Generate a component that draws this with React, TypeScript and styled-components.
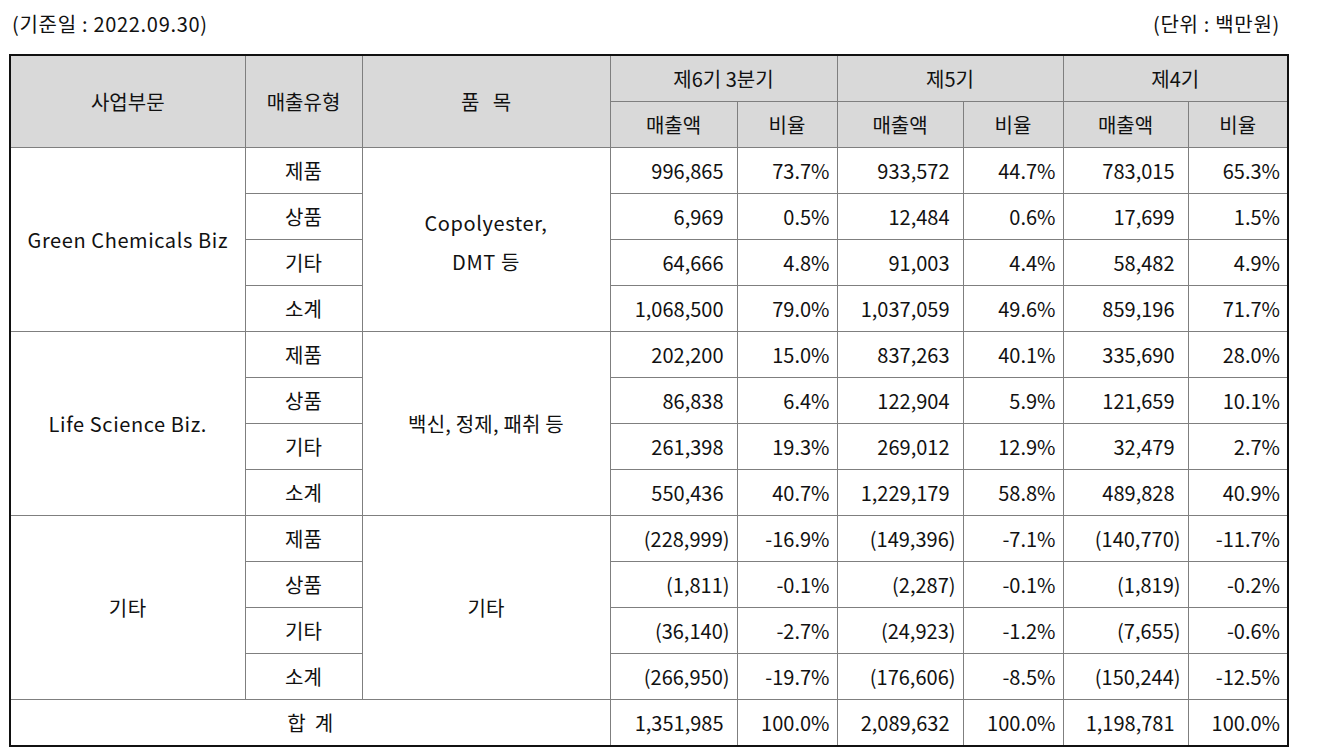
import React from "react";
import styled, { createGlobalStyle } from "styled-components";

const Global = createGlobalStyle`
  html, body { margin: 0; padding: 0; background: #fff; }
  body { font-family: "Noto Sans CJK KR", "Noto Sans", sans-serif; color: #111; }
`;

const Page = styled.div`
  width: 1332px;
  padding: 0 0 0 9px;
  box-sizing: border-box;
`;

const TopBar = styled.div`
  width: 1278px;
  height: 54px;
  display: flex;
  justify-content: space-between;
  align-items: center;
  font-size: 20px;
  letter-spacing: 0.7px;
  padding: 0 7px 8px 3px;
  box-sizing: border-box;
`;

const Table = styled.table`
  border-collapse: collapse;
  table-layout: fixed;
  width: 1278px;
  border: 2px solid #111;
  font-size: 20px;
`;

const HeadCell = styled.th`
  background: #d9d9d9;
  font-weight: 400;
  height: 45px;
  padding: 0;
  border: 1px solid #7f7f7f;
  text-align: center;
  white-space: nowrap;
`;

const Cell = styled.td<{ $align?: "left" | "right" | "center"; $pad?: number }>`
  height: 45px;
  padding: 0 ${(p) => (p.$pad ?? 7)}px 0 0;
  border: 1px solid #7f7f7f;
  text-align: ${(p) => p.$align ?? "center"};
  white-space: nowrap;
  line-height: 1.3;
`;

const CenterCell = styled(Cell)<{ $latin?: boolean }>`
  padding: 0;
  letter-spacing: ${(p) => (p.$latin ? "0.6px" : "0")};
`;

const ItemCell = styled(CenterCell)<{ $multi?: boolean }>`
  line-height: ${(p) => (p.$multi ? "39px" : "1.3")};
  padding-top: ${(p) => (p.$multi ? "4px" : "0")};
  letter-spacing: ${(p) => (p.$multi ? "0.6px" : "0.2px")};
`;

type Row = { type: string; vals: string[] };
type Group = { name: string; item: React.ReactNode; multi?: boolean; rows: Row[] };

const groups: Group[] = [
  {
    name: "Green Chemicals Biz",
    multi: true,
    item: (
      <>
        Copolyester,
        <br />
        DMT 등
      </>
    ),
    rows: [
      { type: "제품", vals: ["996,865", "73.7%", "933,572", "44.7%", "783,015", "65.3%"] },
      { type: "상품", vals: ["6,969", "0.5%", "12,484", "0.6%", "17,699", "1.5%"] },
      { type: "기타", vals: ["64,666", "4.8%", "91,003", "4.4%", "58,482", "4.9%"] },
      { type: "소계", vals: ["1,068,500", "79.0%", "1,037,059", "49.6%", "859,196", "71.7%"] },
    ],
  },
  {
    name: "Life Science Biz.",
    item: "백신, 정제, 패취 등",
    rows: [
      { type: "제품", vals: ["202,200", "15.0%", "837,263", "40.1%", "335,690", "28.0%"] },
      { type: "상품", vals: ["86,838", "6.4%", "122,904", "5.9%", "121,659", "10.1%"] },
      { type: "기타", vals: ["261,398", "19.3%", "269,012", "12.9%", "32,479", "2.7%"] },
      { type: "소계", vals: ["550,436", "40.7%", "1,229,179", "58.8%", "489,828", "40.9%"] },
    ],
  },
  {
    name: "기타",
    item: "기타",
    rows: [
      { type: "제품", vals: ["(228,999)", "-16.9%", "(149,396)", "-7.1%", "(140,770)", "-11.7%"] },
      { type: "상품", vals: ["(1,811)", "-0.1%", "(2,287)", "-0.1%", "(1,819)", "-0.2%"] },
      { type: "기타", vals: ["(36,140)", "-2.7%", "(24,923)", "-1.2%", "(7,655)", "-0.6%"] },
      { type: "소계", vals: ["(266,950)", "-19.7%", "(176,606)", "-8.5%", "(150,244)", "-12.5%"] },
    ],
  },
];

const totals = ["1,351,985", "100.0%", "2,089,632", "100.0%", "1,198,781", "100.0%"];

const widths = [235, 117, 248, 127, 100, 126, 100, 125, 100];

function ValueCells({ vals }: { vals: string[] }) {
  return (
    <>
      {vals.map((v, i) => {
        const isAmount = i % 2 === 0;
        const neg = v.startsWith("(");
        const pad = isAmount && !neg ? 13 : 7;
        return (
          <Cell key={i} $align="right" $pad={pad}>
            {v}
          </Cell>
        );
      })}
    </>
  );
}

export default function App() {
  return (
    <Page>
      <Global />
      <TopBar>
        <span>(기준일 : 2022.09.30)</span>
        <span>(단위 : 백만원)</span>
      </TopBar>
      <Table>
        <colgroup>
          {widths.map((w, i) => (
            <col key={i} style={{ width: w }} />
          ))}
        </colgroup>
        <thead>
          <tr>
            <HeadCell rowSpan={2}>사업부문</HeadCell>
            <HeadCell rowSpan={2}>매출유형</HeadCell>
            <HeadCell rowSpan={2}>품&nbsp;&nbsp;&nbsp;목</HeadCell>
            <HeadCell colSpan={2}>제6기 3분기</HeadCell>
            <HeadCell colSpan={2}>제5기</HeadCell>
            <HeadCell colSpan={2}>제4기</HeadCell>
          </tr>
          <tr>
            <HeadCell>매출액</HeadCell>
            <HeadCell>비율</HeadCell>
            <HeadCell>매출액</HeadCell>
            <HeadCell>비율</HeadCell>
            <HeadCell>매출액</HeadCell>
            <HeadCell>비율</HeadCell>
          </tr>
        </thead>
        <tbody>
          {groups.map((g) =>
            g.rows.map((r, ri) => (
              <tr key={g.name + r.type}>
                {ri === 0 && (
                  <CenterCell rowSpan={4} $latin>
                    {g.name}
                  </CenterCell>
                )}
                <CenterCell>{r.type}</CenterCell>
                {ri === 0 && (
                  <ItemCell rowSpan={4} $multi={g.multi}>
                    {g.item}
                  </ItemCell>
                )}
                <ValueCells vals={r.vals} />
              </tr>
            ))
          )}
          <tr>
            <CenterCell colSpan={3}>합&nbsp;&nbsp;계</CenterCell>
            <ValueCells vals={totals} />
          </tr>
        </tbody>
      </Table>
    </Page>
  );
}
